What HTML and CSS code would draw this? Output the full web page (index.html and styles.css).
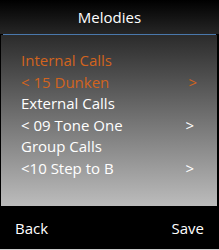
FILE: index.html
```html
<!DOCTYPE html>
<html>
    <head>
        <link rel="stylesheet" href="styles.css">
    </head>
    <body>
        <div class="screen">
            <div class="title">Melodies</div>
            <div class="rule"></div>
            <div class="menu">
                <div class="row active">Internal Calls</div>
                <div class="row active pick"><span>&lt; 15 Dunken</span><span>&gt;</span></div>
                <div class="row">External Calls</div>
                <div class="row pick"><span>&lt; 09 Tone One</span><span>&gt;</span></div>
                <div class="row">Group Calls</div>
                <div class="row pick"><span>&lt;10 Step to B</span><span>&gt;</span></div>
            </div>
            <div class="softkeys">
                <span>Back</span>
                <span>Save</span>
            </div>
        </div>
    </body>
</html>
```

FILE: styles.css
```css
html, body {
    margin: 0;
    padding: 0;
    background: #000;
}

.screen {
    width: 219px;
    height: 250px;
    display: flex;
    flex-direction: column;
    font-family: "Open Sans", sans-serif;
    color: #fff;
    background: #000;
    border-bottom: 1px solid #d0d0d0;
    box-sizing: border-box;
}

.title {
    height: 34px;
    line-height: 34px;
    text-align: center;
    font-size: 15px;
    background: linear-gradient(#000, #262626);
}

.rule {
    height: 1px;
    margin: 0 3px;
    background: #4a78ac;
}

.menu {
    height: 171px;
    margin: 0 2px 0 1px;
    padding: 15px 20px 0 20px;
    box-sizing: border-box;
    background: linear-gradient(#2b2b2b, #bcbcbc);
}

.row {
    height: 21.6px;
    line-height: 21.6px;
    font-size: 15px;
}

.pick {
    display: flex;
    justify-content: space-between;
    padding-right: 3px;
}

.active {
    color: #d2641e;
}

.active.pick {
    padding-right: 0;
}

.softkeys {
    flex: 1;
    display: flex;
    justify-content: space-between;
    align-items: center;
    padding: 0 15px 0 15px;
    font-size: 15px;
}
```
